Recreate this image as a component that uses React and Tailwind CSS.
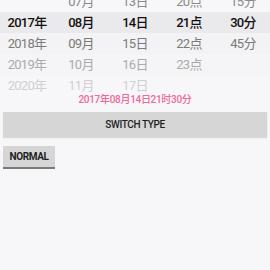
const font = { fontFamily: 'Roboto, "Noto Sans CJK SC", sans-serif' };

const columns = [
  ['', '2017年', '2018年', '2019年', '2020年'],
  ['07月', '08月', '09月', '10月', '11月'],
  ['13日', '14日', '15日', '16日', '17日'],
  ['20点', '21点', '22点', '23点', ''],
  ['15分', '30分', '45分', '', ''],
];

const rowColors = [
  'text-[#8a8a8a] font-normal',
  'text-[#111] font-medium',
  'text-[#7a7a7a] font-normal',
  'text-[#ababab] font-normal',
  'text-[#d0d0d0] font-normal',
];

const rowBgs = ['', 'bg-[#eae9eb]', 'bg-[#f3f2f4]', 'bg-[#f5f4f6]', 'bg-[#f7f6f8]'];

export default function App() {
  return (
    <div className="w-[270px] h-[270px] bg-[#f7f6f8] overflow-hidden" style={font}>
      {/* Wheel picker */}
      <div className="h-[94px] overflow-hidden">
        <div className="mt-[-9px] flex flex-col">
          {[0, 1, 2, 3, 4].map((r) => (
            <div key={r} className={`h-[21px] grid grid-cols-5 items-center ${rowBgs[r]}`}>
              {columns.map((col, c) => (
                <div key={c} className={`text-center text-[13px] tracking-[-0.7px] leading-none ${rowColors[r]}`}>
                  {col[r]}
                </div>
              ))}
            </div>
          ))}
        </div>
      </div>

      <div className="text-center text-[10px] tracking-[-0.3px] leading-[12px] font-medium text-[#ec6a9c]">
        2017年08月14日21时30分
      </div>

      <div className="px-[3px] pt-[5px]">
        <button className="w-full h-[25px] bg-[#d6d6d6] text-[#1f1f1f] text-[10px] tracking-[-0.4px] font-medium shadow-[0_1px_1px_rgba(0,0,0,0.12)]">
          SWITCH TYPE
        </button>
      </div>

      <div className="px-[3px] pt-[6px]">
        <button className="w-[52px] h-[23px] bg-[#d6d6d6] text-[#1f1f1f] text-[10px] tracking-[-0.4px] font-bold border-b-2 border-[#7a7a7a]">
          NORMAL
        </button>
      </div>
    </div>
  );
}
